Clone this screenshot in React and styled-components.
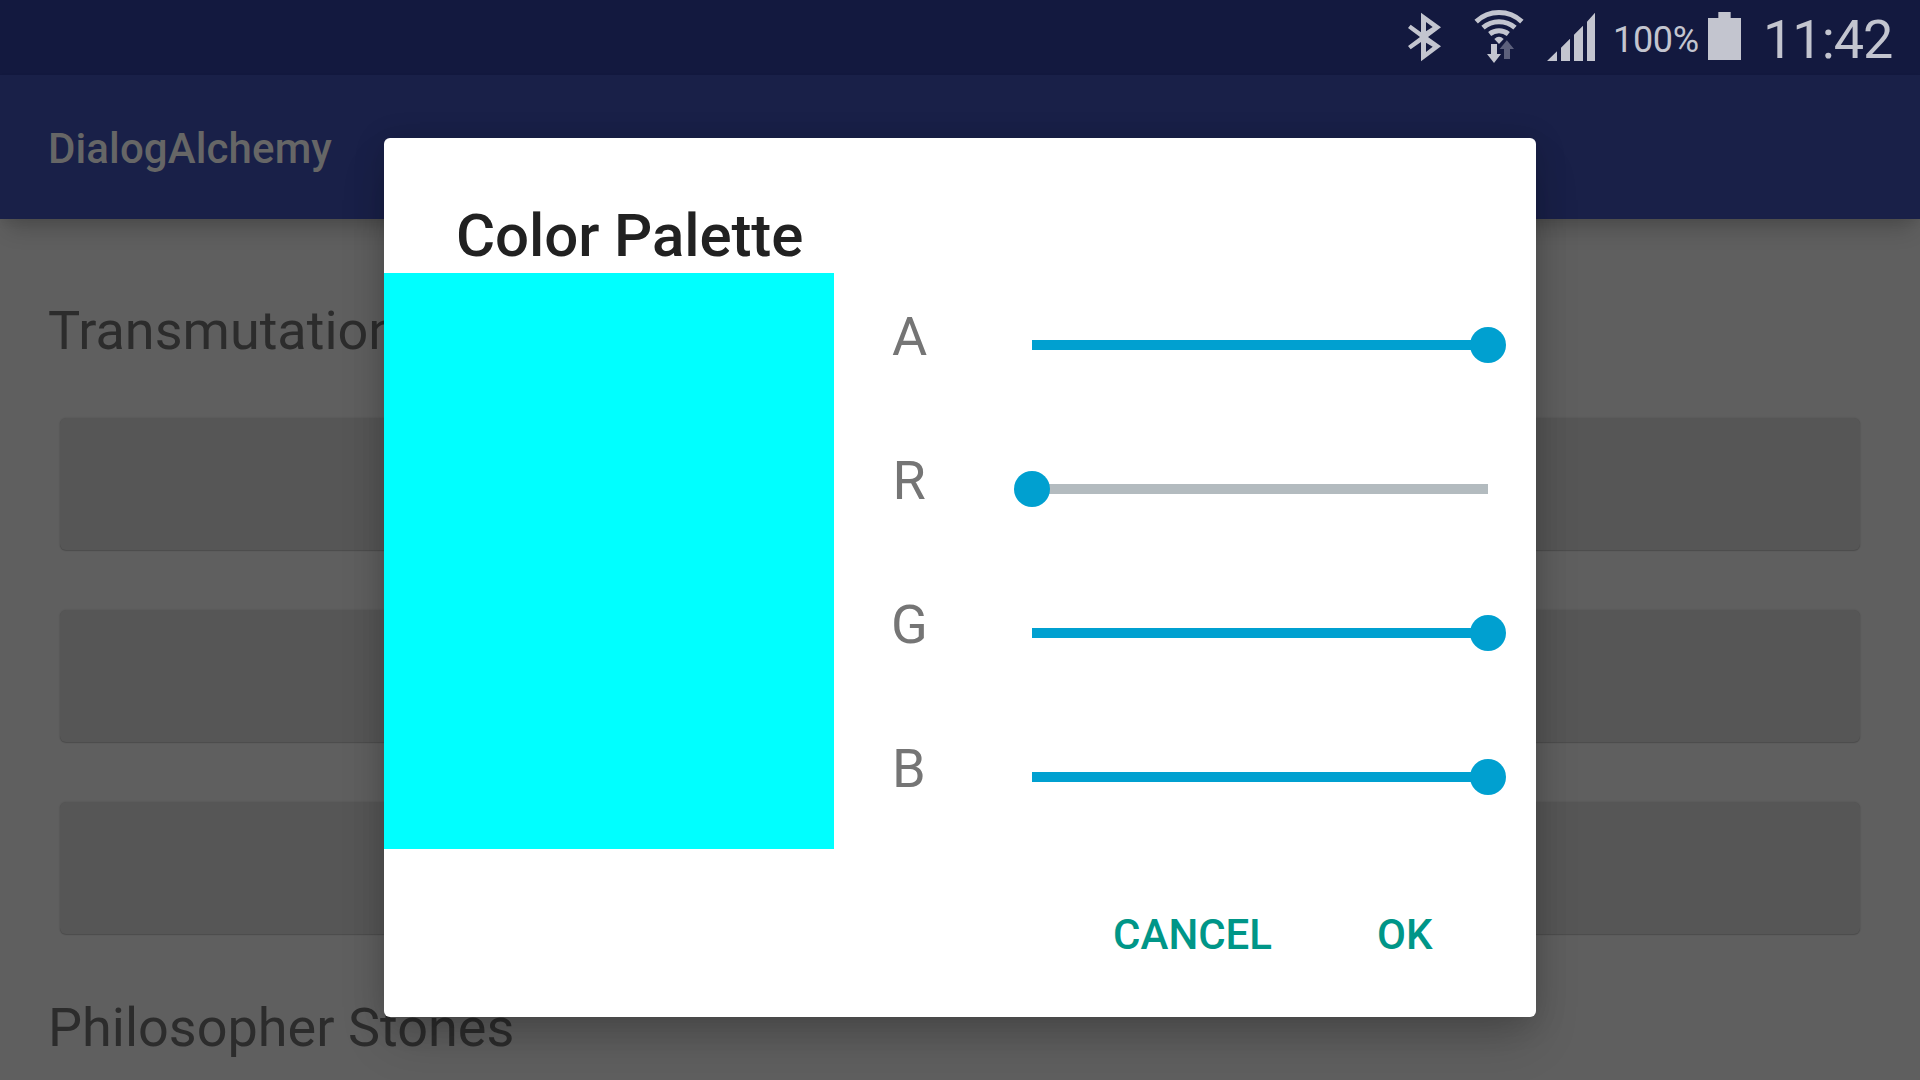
import React from "react";
import styled, { createGlobalStyle } from "styled-components";

const GlobalStyle = createGlobalStyle`
  *, *::before, *::after { box-sizing: border-box; }
  html, body { margin: 0; padding: 0; }
  body { background: #5f5f5f; font-family: Roboto, "Noto Sans", sans-serif; overflow: hidden; }
`;

const STATUS_INK = "#c3c5cf";

const Screen = styled.div`
  position: relative;
  display: flex;
  flex-direction: column;
  width: 1920px;
  height: 1080px;
  overflow: hidden;
  background: #5f5f5f;
`;

const StatusBar = styled.header`
  display: flex;
  flex: none;
  justify-content: flex-end;
  align-items: flex-start;
  height: 75px;
  padding-right: 26px;
  background: #13193f;
  color: ${STATUS_INK};
`;

const StatusIcon = styled.svg`
  display: block;
  flex: none;
  width: ${(p) => p.$width}px;
  height: 75px;
  margin-right: ${(p) => p.$gap}px;
`;

const StatusText = styled.span`
  flex: none;
  width: ${(p) => p.$width}px;
  padding-top: 5px;
  font-size: ${(p) => p.$size}px;
  letter-spacing: ${(p) => p.$tracking}px;
  line-height: 70px;
  white-space: nowrap;
`;

const AppBar = styled.div`
  position: relative;
  display: flex;
  flex: none;
  align-items: center;
  height: 144px;
  padding: 3px 48px 0;
  background: #192048;
  box-shadow: 0 4px 8px rgba(0, 0, 0, 0.06), 0 18px 20px -8px rgba(0, 0, 0, 0.18);
`;

const AppTitle = styled.h1`
  margin: 0;
  color: #666666;
  font-size: 42px;
  font-weight: 500;
  letter-spacing: 0.11px;
  line-height: 50px;
`;

const Content = styled.main`
  display: flex;
  flex-direction: column;
  padding: 80px 48px 0;
`;

const SectionTitle = styled.h2`
  margin: 0;
  color: #2c2c2c;
  font-size: 54px;
  font-weight: 400;
  line-height: 63px;
`;

const ButtonList = styled.div`
  display: flex;
  flex-direction: column;
  gap: 60px;
  padding: 56px 12px 62px;
`;

const RaisedButton = styled.button`
  height: 132px;
  padding: 0;
  border: 0;
  border-radius: 6px;
  background: #565656;
  box-shadow: 0 0 2px rgba(0, 0, 0, 0.16), 0 1px 1px rgba(0, 0, 0, 0.16);
`;

const DialogLayer = styled.div`
  position: absolute;
  inset: 0;
  display: flex;
  justify-content: center;
  align-items: flex-start;
  padding-top: 138px;
`;

const Dialog = styled.section`
  width: 1152px;
  height: 879px;
  border-radius: 6px;
  background: #ffffff;
  box-shadow: 0 4px 32px rgba(0, 0, 0, 0.16), 0 26px 46px -6px rgba(0, 0, 0, 0.18);
`;

const DialogTitle = styled.h2`
  height: 135px;
  margin: 0;
  padding: 60px 72px 0;
  color: #212121;
  font-size: 60px;
  font-weight: 500;
  letter-spacing: -0.1px;
  line-height: 75px;
`;

const DialogBody = styled.div`
  display: flex;
  height: 576px;
`;

const Swatch = styled.div`
  width: 450px;
  background: #00ffff;
`;

const Channels = styled.div`
  display: flex;
  flex: 1;
  flex-direction: column;
`;

const Channel = styled.div`
  display: flex;
  align-items: center;
  height: 144px;
  padding: 0 48px 0 40px;
`;

const ChannelLabel = styled.span`
  width: 158px;
  height: 144px;
  padding-left: ${(p) => p.$indent}px;
  color: #757575;
  font-size: 54px;
  line-height: 127px;
`;

const Track = styled.div`
  position: relative;
  flex: 1;
  height: 10px;
  background: #b3bbbf;
`;

const Fill = styled.div`
  height: 100%;
  background: #00a0d0;
`;

const Thumb = styled.div`
  position: absolute;
  top: -13px;
  width: 36px;
  height: 36px;
  margin-left: -18px;
  border-radius: 50%;
  background: #00a0d0;
`;

const Actions = styled.footer`
  display: flex;
  justify-content: flex-end;
  align-items: center;
  gap: 105px;
  height: 168px;
  padding: 3px 103.5px 0 0;
`;

const TextButton = styled.button`
  padding: 0;
  border: 0;
  background: none;
  color: #009688;
  font-family: inherit;
  font-size: 42px;
  font-weight: 500;
  line-height: 50px;
`;

const channels = [
  { name: "A", value: 255, indent: 18 },
  { name: "R", value: 0, indent: 18.5 },
  { name: "G", value: 255, indent: 17 },
  { name: "B", value: 255, indent: 18 },
];

function BluetoothIcon() {
  return (
    <StatusIcon $width={33} $gap={33} viewBox="54 0 99 225" fill={STATUS_INK}>
      <path
        fillRule="evenodd"
        d="M93 38L153 82L114 111L153 139L93 184V126L62 148L54 138L90 111L54 84L62 74L93 97ZM108 66V94L128 81ZM108 128V156L128 140Z"
      />
    </StatusIcon>
  );
}

function WifiIcon() {
  return (
    <StatusIcon $width={50} $gap={23} viewBox="252 0 150 225">
      <g fill="none" stroke={STATUS_INK} strokeWidth="15">
        <path d="M258.5 65A100 100 0 0 1 395.5 65" />
        <path d="M279 83A73 73 0 0 1 375 83" />
        <path d="M299 102A46 46 0 0 1 355 102" />
      </g>
      <path d="M313 117Q327 104 341 117L327 132Z" fill={STATUS_INK} />
      <path d="M303 132H321V162H333L312 189L291 162H303Z" fill={STATUS_INK} />
      <path d="M342 177H360V147H372L350.500 121L329 147H342Z" fill="#5c607c" />
    </StatusIcon>
  );
}

function SignalIcon() {
  return (
    <StatusIcon $width={48} $gap={18} viewBox="471 0 144 225" fill={STATUS_INK}>
      <path d="M471 183L501 154V183ZM513 183V143L540 116V183ZM552 183V104L579 77V183ZM591 183V65L615 38V183Z" />
    </StatusIcon>
  );
}

function BatteryIcon() {
  return (
    <StatusIcon $width={33} $gap={22} viewBox="354 0 99 225" fill={STATUS_INK}>
      <path d="M354 54H385V36H422V54H453V180H354Z" />
    </StatusIcon>
  );
}

function ChannelSlider({ name, value, indent }) {
  const percent = `${(value / 255) * 100}%`;
  return (
    <Channel>
      <ChannelLabel $indent={indent}>{name}</ChannelLabel>
      <Track>
        <Fill style={{ width: percent }} />
        <Thumb style={{ left: percent }} />
      </Track>
    </Channel>
  );
}

export default function App() {
  return (
    <>
      <GlobalStyle />
      <Screen>
        <StatusBar>
          <BluetoothIcon />
          <WifiIcon />
          <SignalIcon />
          <StatusText $size={36} $width={95} $tracking={-0.3}>100%</StatusText>
          <BatteryIcon />
          <StatusText $size={54} $width={131} $tracking={-1}>11:42</StatusText>
        </StatusBar>
        <AppBar>
          <AppTitle>DialogAlchemy</AppTitle>
        </AppBar>
        <Content>
          <SectionTitle>Transmutation</SectionTitle>
          <ButtonList>
            <RaisedButton />
            <RaisedButton />
            <RaisedButton />
          </ButtonList>
          <SectionTitle>Philosopher Stones</SectionTitle>
        </Content>
        <DialogLayer>
          <Dialog>
            <DialogTitle>Color Palette</DialogTitle>
            <DialogBody>
              <Swatch />
              <Channels>
                {channels.map((c) => (
                  <ChannelSlider key={c.name} {...c} />
                ))}
              </Channels>
            </DialogBody>
            <Actions>
              <TextButton>CANCEL</TextButton>
              <TextButton>OK</TextButton>
            </Actions>
          </Dialog>
        </DialogLayer>
      </Screen>
    </>
  );
}
